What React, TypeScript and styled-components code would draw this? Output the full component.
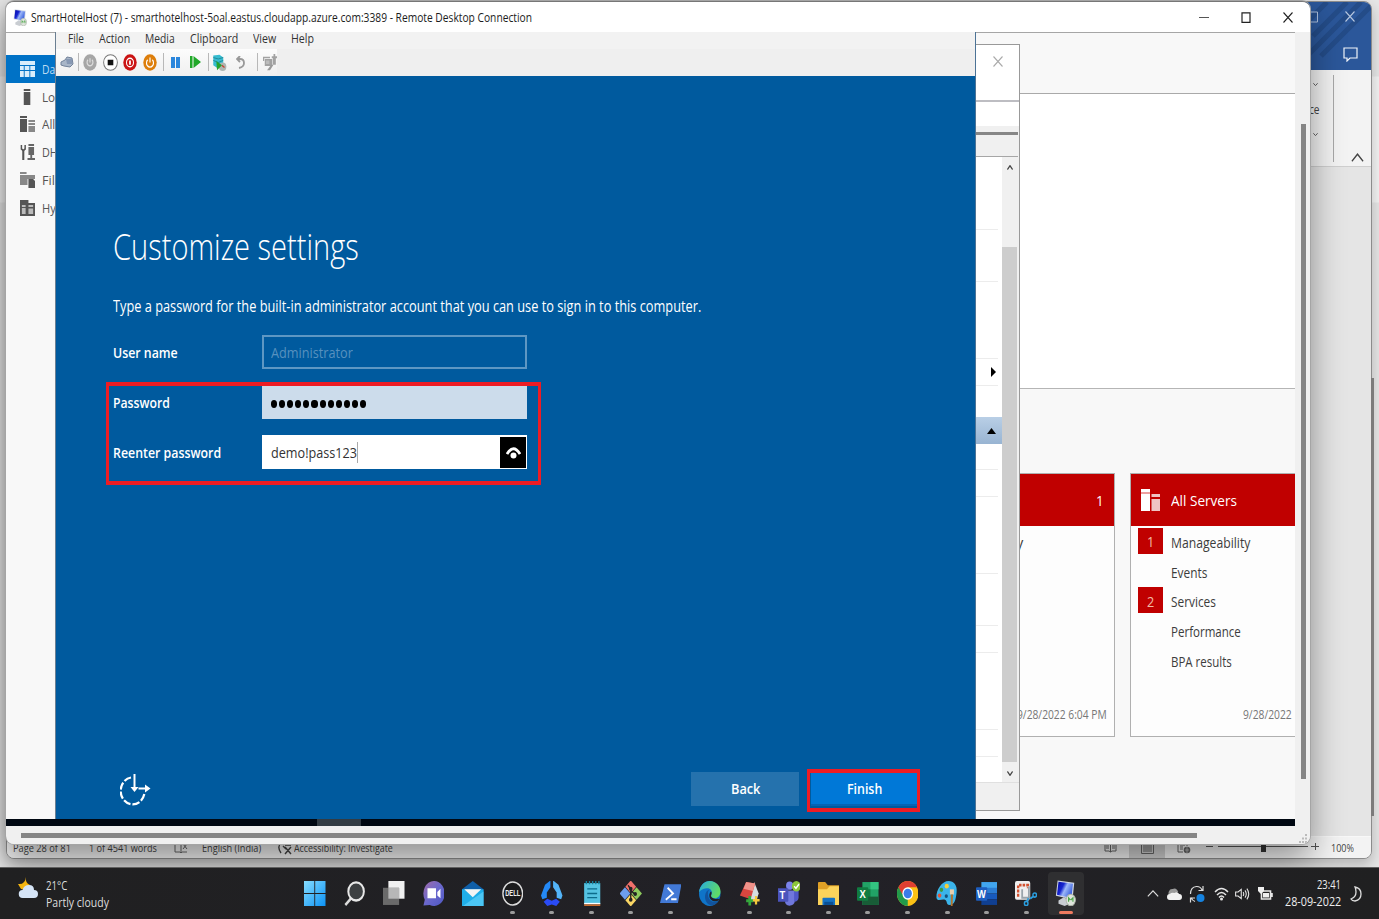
import React, { useLayoutEffect, useRef, useState } from "react";
import styled, { createGlobalStyle } from "styled-components";

const Global = createGlobalStyle`
  *, *::before, *::after { box-sizing: border-box; }
  html, body { margin: 0; padding: 0; overflow: hidden; }
  body { font-family: "Open Sans", "Noto Sans", sans-serif; color: #222; }
  svg { display: block; flex: none; }
`;

/* ---------- condensed text ---------- */

const FitBox = styled.span<{ $w: number }>`
  display: inline-block;
  flex: none;
  width: ${(p) => p.$w}px;
  white-space: nowrap;
`;
const FitInner = styled.span`
  display: inline-block;
  white-space: pre;
  transform-origin: 0 50%;
`;

/* Squeezes its text horizontally to exactly w pixels. */
function Fit({ w, children }: { w: number; children: string }) {
  const ref = useRef<HTMLSpanElement>(null);
  const [scale, setScale] = useState(1);
  useLayoutEffect(() => {
    if (ref.current && ref.current.offsetWidth) {
      setScale(w / ref.current.offsetWidth);
    }
  }, [w, children]);
  return (
    <FitBox $w={w}>
      <FitInner ref={ref} style={{ transform: `scaleX(${scale})` }}>
        {children}
      </FitInner>
    </FitBox>
  );
}

/* ---------- desktop ---------- */

const Desktop = styled.div`
  position: relative;
  width: 1379px;
  height: 919px;
  overflow: hidden;
  background: linear-gradient(#e6e6e6 0 76px, #f3f3f3 77px 202px, #e6e6e6 203px);
`;

/* ---------- Word window ---------- */

const WordWindow = styled.div`
  position: absolute;
  left: 6px;
  top: 1px;
  width: 1366px;
  height: 858px;
  display: flex;
  flex-direction: column;
  border: 1px solid #8c8c8c;
  border-radius: 8px;
  overflow: hidden;
  background: #e5e5e5;
  box-shadow: 0 6px 14px rgba(0, 0, 0, 0.22);
`;
const WordTitle = styled.div`
  position: relative;
  height: 68px;
  flex: none;
  display: flex;
  flex-direction: column;
  align-items: flex-end;
  padding: 9px 13px 0 0;
  gap: 24px;
  background: #2b579a;
`;
const WordStripes = styled.svg`
  position: absolute;
  right: 0;
  top: 0;
`;
const WordControls = styled.div`
  position: relative;
  display: flex;
  gap: 27px;
  padding-right: 3px;
`;
const WordRibbon = styled.div`
  height: 97px;
  flex: none;
  display: flex;
  justify-content: flex-end;
  background: #f3f3f3;
  border-bottom: 1px solid #cfcfcf;
`;
const RibbonGroup = styled.div`
  width: 31px;
  margin: 5px 0 4px;
  border-right: 1px solid #a8a8a8;
  display: flex;
  flex-direction: column;
  gap: 15px;
  padding: 8px 0 0 6px;
  font-size: 12px;
  line-height: 17px;
  color: #444;
  > svg { margin-left: 4px; }
`;
const RibbonCollapse = styled.div`
  width: 37px;
  display: flex;
  align-items: flex-end;
  justify-content: center;
  padding: 0 0 4px 9px;
`;
const WordCanvas = styled.div`
  flex: 1;
`;
const WordStatus = styled.div`
  height: 22px;
  flex: none;
  display: flex;
  align-items: center;
  padding: 0 17px 0 6px;
  background: #f3f3f3;
  border-top: 1px solid #f8f8f8;
  font-size: 11px;
  line-height: 16px;
  color: #444;
`;
const Gap = styled.span<{ $w: number }>`
  width: ${(p) => p.$w}px;
  flex: none;
`;
const Grow = styled.span`
  flex: 1;
`;
const ActiveView = styled.span`
  width: 36px;
  height: 22px;
  display: flex;
  align-items: center;
  justify-content: center;
  background: #cfcfcf;
`;
const WordScrollThumb = styled.div`
  position: absolute;
  left: 1371px;
  top: 378px;
  width: 3px;
  height: 438px;
  background: #7b7b7b;
`;

/* ---------- remote desktop window ---------- */

const RemoteWindow = styled.div`
  position: absolute;
  left: 6px;
  top: 1px;
  width: 1304px;
  height: 843px;
  display: flex;
  flex-direction: column;
  border-radius: 8px;
  overflow: hidden;
  background: #f0f0f0;
  border-top: 1px solid #777;
`;
const RemoteShadow = styled.div`
  position: absolute;
  left: 6px;
  top: 1px;
  width: 1304px;
  height: 843px;
  border-radius: 8px;
  box-shadow: 0 0 0 1px #a5a5a5, 0 15px 34px rgba(0, 0, 0, 0.42);
`;
const TitleBar = styled.div`
  height: 30px;
  flex: none;
  display: flex;
  align-items: center;
  padding: 0 17px 0 7px;
  background: #fff;
  font-size: 12.5px;
  color: #1c1c1c;
`;
const WindowControls = styled.div`
  display: flex;
  gap: 32px;
  margin-left: auto;
`;
const RemoteBody = styled.div`
  display: flex;
  height: 794px;
  flex: none;
`;
const Screen = styled.div`
  position: relative;
  width: 1289px;
  overflow: hidden;
`;
const VScroll = styled.div`
  width: 15px;
  padding: 92px 4px 0 6px;
`;
const VThumb = styled.div`
  height: 655px;
  background: #858585;
`;
const HScroll = styled.div`
  flex: 1;
  display: flex;
  justify-content: space-between;
  align-items: flex-start;
  padding: 7px 2px 0 15px;
`;
const HThumb = styled.div`
  width: 1176px;
  height: 5px;
  background: #858585;
`;
const RemoteTaskStrip = styled.div`
  height: 7px;
  background: #000812;
  padding-left: 311px;
`;
const StripItem = styled.div`
  width: 44px;
  height: 7px;
  background: #333c44;
`;

/* ---------- Server Manager ---------- */

const ServerManager = styled.div`
  display: flex;
  height: 787px;
  border-top: 1px solid #a6a6a6;
  background: #f8f8f8;
`;
const SideNav = styled.div`
  width: 50px;
  flex: none;
  padding-top: 22px;
`;
const NavItem = styled.div<{ $active?: boolean }>`
  display: flex;
  align-items: center;
  gap: 7px;
  height: 27.8px;
  padding-left: 14px;
  font-size: 13.5px;
  overflow: hidden;
  color: ${(p) => (p.$active ? "#bcdcf2" : "#555")};
  background: ${(p) => (p.$active ? "#0072c6" : "none")};
`;
const Dashboard = styled.div`
  flex: 1;
  display: flex;
  flex-direction: column;
`;
const DashHeader = styled.div`
  height: 61px;
  border-bottom: 1px solid #a9a9a9;
`;
const WelcomePane = styled.div`
  height: 295px;
  background: #fff;
  border-bottom: 1px solid #b5b5b5;
`;
const TileRow = styled.div`
  display: flex;
  justify-content: flex-start;
  gap: 15px;
  padding: 84px 0 0 894px;
`;
const Tile = styled.div`
  width: 165px;
  height: 264px;
  flex: none;
  display: flex;
  flex-direction: column;
  border: 1px solid #b0b0b0;
  background: #fdfdfd;
  font-size: 14.5px;
  color: #3c3c3c;
  & + & { border-right: 0; }
`;
const TileHead = styled.div`
  height: 52px;
  flex: none;
  display: flex;
  align-items: center;
  gap: 11px;
  padding: 0 10px;
  background: #c00000;
  color: #fff;
  font-size: 15px;
`;
const TileLine = styled.div`
  display: flex;
  align-items: center;
  gap: 8px;
  height: 29.8px;
  padding-left: 7px;
  > span:last-child { padding-top: 3px; }
`;
const Count = styled.span<{ $on: boolean }>`
  width: 25px;
  height: 26px;
  display: flex;
  align-items: center;
  justify-content: center;
  padding-top: 2px;
  color: #f3b9a4;
  background: ${(p) => (p.$on ? "#c00000" : "transparent")};
`;
const TileDate = styled.div<{ $pad: number }>`
  margin-top: auto;
  padding: 0 ${(p) => p.$pad}px 12px 0;
  text-align: right;
  font-size: 13px;
  line-height: 20px;
  color: #777;
`;

/* ---------- Hyper-V Manager window behind the VM ---------- */

const ManagerWindow = styled.div`
  position: absolute;
  left: 920px;
  top: 12px;
  width: 94px;
  height: 767px;
  display: flex;
  flex-direction: column;
  padding-left: 49px;
  border: 1px solid #999;
  background: #f0f0f0;
`;
const ManagerTitle = styled.div`
  height: 57px;
  padding: 11px 0 0 17px;
  background: #fff;
  border-bottom: 2px solid #bdbdc2;
`;
const ManagerMenu = styled.div`
  height: 24px;
  background: #fff;
`;
const ManagerTools = styled.div`
  height: 25px;
  margin: 6px 1px 0 0;
  border-top: 3px solid #868686;
  border-bottom: 1px solid #a6a6a6;
`;
const ManagerBody = styled.div`
  display: flex;
  height: 626px;
  border-bottom: 1px solid #e0e0e0;
`;
const Actions = styled.div`
  width: 26px;
  background: #fff;
`;
const ActionBlock = styled.div<{ $h: number; $line?: boolean; $hot?: boolean }>`
  display: flex;
  align-items: center;
  justify-content: flex-end;
  height: ${(p) => p.$h}px;
  margin-right: ${(p) => (p.$hot ? 0 : 4)}px;
  padding-right: ${(p) => (p.$hot ? 6 : 2)}px;
  border-bottom: ${(p) => (p.$line ? "1px solid #ececec" : "0")};
  background: ${(p) => (p.$hot ? "linear-gradient(#b9cfe6, #98b4d2)" : "none")};
`;
const ManagerScroll = styled.div`
  width: 15px;
  display: flex;
  flex-direction: column;
  justify-content: space-between;
  align-items: center;
  padding: 8px 0 6px;
  background: #f0f0f0;
`;
const ManagerThumb = styled.div`
  width: 15px;
  height: 515px;
  margin-top: 67px;
  background: #cdcdcd;
`;

/* ---------- virtual machine window ---------- */

const VmWindow = styled.div`
  position: absolute;
  left: 49px;
  top: 0;
  width: 921px;
  height: 787px;
  display: flex;
  flex-direction: column;
  border-left: 1px solid #6b7f92;
  border-right: 1px solid #4c7396;
  background: #f2f2f2;
`;
const MenuBar = styled.div`
  display: flex;
  gap: 15px;
  height: 17px;
  flex: none;
  padding-left: 12px;
  font-size: 12px;
  line-height: 13px;
  color: #333;
`;
const ToolArea = styled.div`
  height: 27px;
  flex: none;
  background: #efefef;
`;
const ToolBar = styled.div`
  width: 221px;
  height: 26px;
  display: flex;
  align-items: center;
  padding-left: 4px;
  background: linear-gradient(#fcfcfc, #f0f0f0);
`;
const ToolSep = styled.span<{ $m: number }>`
  width: 1px;
  height: 18px;
  margin: 0 ${(p) => p.$m}px;
  background: #b8b8b8;
`;
const ToolSlot = styled.span<{ $w: number }>`
  width: ${(p) => p.$w}px;
  flex: none;
  display: flex;
  justify-content: center;
`;
const VmScreen = styled.div`
  flex: 1;
  display: flex;
  flex-direction: column;
  padding: 145px 57px 13px 57px;
  background: #005a9e;
  color: #fff;
`;
const Heading = styled.h1`
  margin: 0;
  height: 51px;
  font-size: 36px;
  line-height: 51px;
  font-weight: 300;
`;
const Intro = styled.p`
  margin: 23px 0 18px;
  font-size: 15.5px;
  line-height: 22px;
`;
const Form = styled.div`
  display: flex;
  flex-direction: column;
  gap: 16px;
`;
const FormRow = styled.div`
  display: flex;
  align-items: center;
  height: 34px;
  font-size: 15px;
`;
const FormLabel = styled.div`
  width: 149px;
  font-weight: 600;
`;
const Field = styled.div<{ $kind: "disabled" | "filled" | "focus" }>`
  width: 265px;
  height: 34px;
  display: flex;
  align-items: center;
  padding: 0 1px 0 ${(p) => (p.$kind === "disabled" ? 7 : 9)}px;
  color: ${(p) => (p.$kind === "disabled" ? "#5791bf" : p.$kind === "filled" ? "#000" : "#333")};
  background: ${(p) => ({ disabled: "transparent", filled: "#ccdceb", focus: "#fff" })[p.$kind]};
  border: ${(p) => (p.$kind === "disabled" ? "2px solid #5e97c3" : "0")};
`;
const Dots = styled.span`
  display: flex;
  gap: 2px;
  padding-top: 4px;
`;
const Dot = styled.i`
  width: 6.1px;
  height: 7.5px;
  border-radius: 50%;
  background: #000;
`;
const Caret = styled.span`
  width: 1px;
  height: 21px;
  background: #aaa;
`;
const Reveal = styled.span`
  width: 26px;
  height: 31px;
  margin-left: auto;
  display: flex;
  align-items: center;
  justify-content: center;
  background: #000;
`;
const VmFooter = styled.div`
  display: flex;
  align-items: center;
  gap: 12px;
  margin-top: auto;
  padding-left: 7px;
`;
const WizardButton = styled.button<{ $primary?: boolean }>`
  width: ${(p) => (p.$primary ? 107 : 108)}px;
  height: 34px;
  padding: 0 0 ${(p) => (p.$primary ? 0 : 1)}px;
  border: 0;
  border-bottom: ${(p) => (p.$primary ? "2px solid #0763b4" : "0")};
  font: 600 14.5px "Open Sans", sans-serif;
  color: #fff;
  background: ${(p) => (p.$primary ? "#0078d7" : "#2572ad")};
`;
const Callout = styled.div<{ $x: number; $y: number; $w: number; $h: number }>`
  position: absolute;
  left: ${(p) => p.$x}px;
  top: ${(p) => p.$y}px;
  width: ${(p) => p.$w}px;
  height: ${(p) => p.$h}px;
  border: 4px solid #ed1c24;
  border-left-width: 3px;
  border-right-width: 3px;
`;

/* ---------- taskbar ---------- */

const TaskBar = styled.div`
  position: absolute;
  left: 0;
  right: 0;
  bottom: 0;
  height: 52px;
  display: flex;
  align-items: center;
  border-top: 1px solid #606060;
  background: linear-gradient(90deg, #202021, #222127 60%, #202021);
  color: #eee;
  font-size: 12px;
`;
const Weather = styled.div`
  width: 295px;
  display: flex;
  gap: 8px;
  padding-left: 18px;
`;
const WeatherText = styled.div`
  display: flex;
  flex-direction: column;
  line-height: 17px;
  color: #ddd;
`;
const AppCell = styled.div<{ $active?: boolean }>`
  width: ${(p) => (p.$active ? 36 : 39.53)}px;
  height: 43px;
  flex: none;
  display: flex;
  flex-direction: column;
  align-items: center;
  justify-content: flex-end;
  gap: 5px;
  margin-left: ${(p) => (p.$active ? 2 : 0)}px;
  border-radius: 4px;
  background: ${(p) => (p.$active ? "#2f2f31" : "none")};
`;
const Mark = styled.span<{ $kind: "none" | "open" | "active" }>`
  width: ${(p) => (p.$kind === "active" ? 14 : 5)}px;
  height: 3px;
  border-radius: 2px;
  margin-bottom: 1px;
  background: ${(p) => ({ none: "transparent", open: "#9b9b9b", active: "#ef7b60" })[p.$kind]};
`;
const Tray = styled.div`
  display: flex;
  align-items: center;
  margin-left: auto;
  padding-right: 17px;
`;
const Clock = styled.div`
  display: flex;
  flex-direction: column;
  align-items: flex-end;
  line-height: 17px;
  font-size: 12.5px;
  margin: 0 9px 1px 12px;
`;

/* ---------- icons ---------- */

const Art = ({ w, h, box = "0 0 24 24", children }: { w: number; h: number; box?: string; children: React.ReactNode }) => (
  <svg width={w} height={h} viewBox={box} preserveAspectRatio="none" fill="none">
    {children}
  </svg>
);

const Letter = ({ x, y, children }: { x: number; y: number; children: string }) => (
  <text x={x} y={y} fontSize="10.5" fontWeight="700" fontFamily="Liberation Sans, sans-serif" textAnchor="middle" fill="#fff">
    {children}
  </text>
);

const RemoteIcon = ({ w, h }: { w: number; h: number }) => (
  <Art w={w} h={h}>
    <defs>
      <linearGradient id="scr" x1="0" y1="0" x2="1" y2=".5">
        <stop offset="0" stopColor="#0508a8" />
        <stop offset=".4" stopColor="#1626d0" />
        <stop offset=".6" stopColor="#9db8f8" />
        <stop offset="1" stopColor="#3c62df" />
      </linearGradient>
    </defs>
    <path d="M4 19l6-3 7 3v3l-6 2-7-2z" fill="#c9cdd2" />
    <path d="M3 .5l19 2-2 15.500L1 14.500z" fill="#cfd6e4" />
    <path d="M4 1.500l16.500 2-1.800 13L2.300 13.500z" fill="url(#scr)" />
    <circle cx="18" cy="18.500" r="5.300" fill="#dfe5dc" stroke="#aeb5ab" />
    <path d="M15.500 20v-3.500l2 2M18 18.500l2.500-2V20" stroke="#4ca64a" strokeWidth="1.300" />
  </Art>
);

const CloseX = ({ c, s = 10 }: { c: string; s?: number }) => (
  <Art w={s} h={s + 1} box="0 0 10 10">
    <path d="M.5.5l9 9M9.500.5l-9 9" stroke={c} strokeWidth="1.100" />
  </Art>
);

const Chevron = ({ c, w, h, up }: { c: string; w: number; h: number; up?: boolean }) => (
  <Art w={w} h={h} box="0 0 10 6">
    <path d={up ? "M.7 5.500L5 .8l4.300 4.700" : "M.7.5L5 5.200 9.300.5"} stroke={c} strokeWidth={w < 8 ? 1.8 : 1} />
  </Art>
);

const navIcons: Record<string, React.ReactNode> = {
  dash: <path d="M0 0h16v4H0zM0 5h4v4H0zM5 5h5v4H5zM11 5h5v4h-5zM0 10h4v6H0zM5 10h5v6H5zM11 10h5v6h-5z" fill="#d9eefb" />,
  local: <path d="M4 0h7v2H4zM4 3h7v13H4z" fill="#555" />,
  all: (
    <>
      <path d="M0 0h7.500v2H0zM0 3h7.500v13H0z" fill="#555" />
      <path d="M9 4h7v2H9zM9 7h7v2H9zM9 10h7v6H9z" fill="#888" />
    </>
  ),
  dhcp: (
    <>
      <path d="M1.500 1v4l2 1.500 2-1.500V1" stroke="#555" strokeWidth="1.600" />
      <path d="M3.500 6v10" stroke="#555" strokeWidth="2.200" />
      <path d="M9 0h6v2H9zM9 3h6v8H9zM11 11h2v5h-2zM8 14h8v2H8z" fill="#666" />
    </>
  ),
  file: (
    <>
      <path d="M0 0h7v2H0zM0 3h16v4H8v6H0z" fill="#888" />
      <path d="M9 7h5l2 2v7H9z" fill="#555" />
    </>
  ),
  hyper: (
    <>
      <path d="M0 0h9v3h7v13H0z" fill="#555" />
      <path d="M2 5h4v2H2zM2 8h4v6H2zM9 5h5v2H9zM9 8.500h5V14H9z" fill="#bbb" />
    </>
  ),
};

const appIcons: { name: string; mark: "none" | "open" | "active"; art: React.ReactNode }[] = [
  {
    name: "start", mark: "none",
    art: (
      <>
        <linearGradient id="win" x1="0" y1="0" x2="1" y2="1"><stop stopColor="#86ddff" /><stop offset="1" stopColor="#0c92f5" /></linearGradient>
        <path d="M0 0h11.500v11.500H0zM12.500 0H24v11.500H12.500zM0 12.500h11.500V24H0zM12.500 12.500H24V24H12.500z" fill="url(#win)" />
      </>
    ),
  },
  {
    name: "search", mark: "none",
    art: (
      <>
        <path d="M8 16.500L1.500 23" stroke="#ddd" strokeWidth="2.600" />
        <circle cx="13.500" cy="10" r="8.700" fill="#3d4042" stroke="#e8e8e8" strokeWidth="2.200" />
      </>
    ),
  },
  {
    name: "tasks", mark: "none",
    art: (
      <>
        <path d="M6 0h18v17H6z" fill="#f1f1f1" />
        <path d="M0 6.500h18V23H0z" fill="#6a6a6a" />
        <path d="M6 6.500h12V17H6z" fill="#b7b7b7" />
      </>
    ),
  },
  {
    name: "chat", mark: "none",
    art: (
      <>
        <linearGradient id="chat" x1="0" y1="0" x2="1" y2="1"><stop stopColor="#a06aa8" /><stop offset=".5" stopColor="#6a68cc" /><stop offset="1" stopColor="#4d57c4" /></linearGradient>
        <path d="M12 0a12 12 0 1 1-4.500 23L.5 23.500 2 18A12 12 0 0 1 12 0z" fill="url(#chat)" />
        <path d="M5 7h9.500v9.500H5zM16 10.500l3.500-3v9L16 14z" fill="#fff" />
      </>
    ),
  },
  {
    name: "mail", mark: "none",
    art: (
      <>
        <path d="M0 8L12 0l12 8v3H0z" fill="#0f5fa8" />
        <path d="M0 8h24v16H0z" fill="#1faee8" />
        <path d="M24 10v14H1z" fill="#4cc6f4" />
        <path d="M2.500 8h19L12 15.500z" fill="#f4f4f4" />
      </>
    ),
  },
  {
    name: "dell", mark: "open",
    art: (
      <>
        <circle cx="12" cy="12" r="11" fill="#1b1b1d" stroke="#ddd" strokeWidth="1.500" />
        <text x="3.500" y="14.800" fontSize="8" fontWeight="700" fontFamily="Liberation Sans, sans-serif" fill="#eee" textLength="17" lengthAdjust="spacingAndGlyphs">DELL</text>
      </>
    ),
  },
  {
    name: "hub", mark: "open",
    art: (
      <>
        <path d="M10.500-.5v6.500L6.500 11v5L1.500 17.500 0 14 4.500 3.500z" fill="#2489f7" />
        <path d="M13.500-.5v6.500l4 5v5l5 1.500L24 14 19.500 3.500z" fill="#53b4f8" />
        <path d="M3 20l4-3 5 2 5-2 4 3-4 4-5-1.500L7 24z" fill="#2a4bf5" />
      </>
    ),
  },
  {
    name: "notes", mark: "open",
    art: (
      <>
        <path d="M3.500 2h18v20h-18z" fill="#55c3e2" />
        <path d="M3.500 21h18v1.500h-18z" fill="#fff" /><path d="M3.500 22.500h18V24h-18z" fill="#c96b2c" />
        <path d="M6 0v3M9.500 0v3M13 0v3M16.500 0v3M20 0v3" stroke="#15819e" strokeWidth="1.500" />
        <path d="M7 7.500h11M7 12h11M7 16h11" stroke="#0d6c8c" strokeWidth="1.300" />
      </>
    ),
  },
  {
    name: "git", mark: "open",
    art: (
      <>
        <path d="M12-.5l6 6-6 6-6-6z" fill="#f0716b" /><path d="M18.500 6l6 6-6 6-6-6z" fill="#8fcb5d" />
        <path d="M12 12.500l6 6-6 6-6-6z" fill="#fbd765" /><path d="M5.500 6l6 6-6 6-6-6z" fill="#6d9eee" />
        <path d="M9 4l3 4v11M12 9l5 4" stroke="#222" strokeWidth="1.500" />
        <circle cx="12" cy="7.500" r="2" fill="#222" /><circle cx="12" cy="18" r="2" fill="#222" /><circle cx="17" cy="12.500" r="2" fill="#222" />
      </>
    ),
  },
  {
    name: "shell", mark: "open",
    art: (
      <>
        <path d="M5 3h19l-4 18H0z" fill="#4279d6" />
        <path d="M8.500 6.500l6 5.500-8 6M12.500 17.500h6" stroke="#fff" strokeWidth="2" />
      </>
    ),
  },
  {
    name: "edge", mark: "open",
    art: (
      <>
        <linearGradient id="edg" x1="0" y1="0" x2="1" y2=".4"><stop stopColor="#26a9e0" /><stop offset="1" stopColor="#5fdb67" /></linearGradient>
        <circle cx="12" cy="12" r="12" fill="#0f74c8" />
        <path d="M0 11C1 4 6 0 12 0c7 0 12 5 12 10 0 4-3 6.500-6.500 6.500S13 15 14 13c1.500-4-2-6.500-5.500-6C4 7.500 1 9 0 11z" fill="url(#edg)" />
        <path d="M8.500 10c-4 5-1 13 6 13.500 3 0 6-2 7.500-4.500-5 3-13 0-12-8 .3-1 .8-2 1.500-2.500-1 0-2 .5-3 1.500z" fill="#12539d" />
        <path d="M13.500 10c1 1 .5 2.500-.3 4 0 2 3.300 4 7.800 3l2 .5-2 1.500c-3.500 1.500-9.500 0-9.500-5 0-1.500.5-3 2-4z" fill="#222127" />
      </>
    ),
  },
  {
    name: "cards", mark: "open",
    art: (
      <>
        <path d="M17 1l5 11-3 8-7-2z" fill="#d6dde0" />
        <path d="M8 1l10 1.500-5 15L1 14z" fill="#d8463f" /><path d="M8 1l10 1.500-2.500 7L5 7.500z" fill="#f0928a" />
        <path d="M12 14.500v9M8 19h8" stroke="#35a83c" strokeWidth="3" />
        <path d="M19 14.500v8M15.500 18.500H23" stroke="#f4c93c" strokeWidth="2.500" />
      </>
    ),
  },
  {
    name: "teams", mark: "open",
    art: (
      <>
        <circle cx="13" cy="4.500" r="4" fill="#7b83eb" /><path d="M8 9h11v8a6 6 0 0 1-11 4z" fill="#7078dc" /><path d="M18 9h5v7a4.500 4.500 0 0 1-5 4z" fill="#5059c9" />
        <rect x="-1" y="7" width="12.500" height="13" rx="1" fill="#4b53bc" />
        <Letter x={5} y={17.500}>T</Letter>
        <circle cx="20.500" cy="5" r="5" fill="#8cc63a" /><path d="M18 5l2 2 3.500-4" stroke="#fff" strokeWidth="1.500" />
      </>
    ),
  },
  {
    name: "files", mark: "open",
    art: (
      <>
        <path d="M0 2q0-1 1-1h7l3 3h12q1 0 1 1v6H0z" fill="#e0a126" />
        <path d="M0 8h10l3-3h11v18H0z" fill="#fcd35b" />
        <path d="M5 17q0-1 1-1h12q1 0 1 1v6H5z" fill="#1672c4" /><path d="M7 20h10v3H7z" fill="#0a4f94" />
      </>
    ),
  },
  {
    name: "excel", mark: "open",
    art: (
      <>
        <path d="M6 1h18v22H6z" fill="#21a366" /><path d="M15 1h9v7h-9z" fill="#33c481" /><path d="M6 8h9v8H6z" fill="#107c41" /><path d="M6 15h18v8H6z" fill="#185c37" />
        <rect x="0" y="6" width="12.500" height="13" rx="1" fill="#107c41" />
        <Letter x={6.200} y={16.200}>X</Letter>
      </>
    ),
  },
  {
    name: "chrome", mark: "open",
    art: (
      <>
        <circle cx="12" cy="12" r="12" fill="#fbc116" />
        <path d="M1.600 6L12 6l0 18A12 12 0 0 1 1.600 6z" fill="#229a4a" />
        <path d="M1.600 6A12 12 0 0 1 22.400 6H12l-6 7z" fill="#df3f32" />
        <circle cx="12" cy="12" r="6" fill="#fff" /><circle cx="12" cy="12" r="4.600" fill="#3a7ce8" />
      </>
    ),
  },
  {
    name: "paint", mark: "open",
    art: (
      <>
        <path d="M14 0c6 0 10 4 9 11s-2 12-8 12c-4 0-2-4-5-5s-9 2-9.500-2C0 8 7 0 14 0z" fill="#3bb4ea" />
        <circle cx="6" cy="8.500" r="2" fill="#3f9a3b" /><circle cx="12" cy="5" r="2.300" fill="#f4cf3a" /><circle cx="4" cy="14" r="2" fill="#e55536" /><circle cx="11.500" cy="14.500" r="1.800" fill="#14527e" />
        <path d="M15.500 8h4.500v5h-4.500z" fill="#e8cfae" /><path d="M16.500 13h2.500l-.5 11h-2z" fill="#b4742e" />
      </>
    ),
  },
  {
    name: "word", mark: "open",
    art: (
      <>
        <path d="M6 1h18v6H6z" fill="#41a5ee" /><path d="M6 6.500h18V12H6z" fill="#2b7cd3" /><path d="M6 12h18v5.500H6z" fill="#185abd" /><path d="M6 17.500h18V23H6z" fill="#103f91" />
        <rect x="0" y="6" width="12.500" height="13" rx="1" fill="#1d5ec0" />
        <Letter x={6.200} y={16.200}>W</Letter>
      </>
    ),
  },
  {
    name: "snip", mark: "open",
    art: (
      <>
        <rect x="0" y="0" width="17" height="18" rx="2" fill="#efefef" />
        <path d="M3.500 15V4h11v3" stroke="#d3512f" strokeWidth="2.600" strokeDasharray="2.800 1.200" />
        <path d="M8 8v8h9M15.500 5v11l-2 4" stroke="#9aa4ab" strokeWidth="2" />
        <circle cx="22" cy="13.500" r="2" stroke="#2b9fe0" strokeWidth="1.600" /><circle cx="12.500" cy="21.500" r="2" stroke="#2b9fe0" strokeWidth="1.600" /><path d="M20 15l-3 2M13.500 19.500l1.500-3" stroke="#2b9fe0" strokeWidth="1.800" />
      </>
    ),
  },
];

const SpeakerWaves = <path d="M1 9h4l5-4v14l-5-4H1zM13 9q2 3 0 6M16 6.500q4 5.500 0 11M19 4q6 8 0 16" stroke="#e6e6e6" strokeWidth="1.700" />;

/* ---------- page parts ---------- */

const Word = () => (
  <WordWindow>
    <WordTitle>
      <WordStripes width="66" height="68" viewBox="0 0 66 68">
        <g stroke="#244c88" strokeWidth="5">
          <path d="M0 22L22 0M8 34L42 0M-2 58L56 0M16 54L70 0" />
        </g>
      </WordStripes>
      <WordControls>
        <Art w={10} h={12} box="0 0 10 12"><path d="M.5 1h9v10h-9z" stroke="#a9bcd9" /></Art>
        <CloseX c="#b7c7df" />
      </WordControls>
      <Art w={15} h={15} box="0 0 15 15"><path d="M1 1h13v10H7l-3 3v-3H1z" stroke="#f2f5fa" strokeWidth="1.200" /></Art>
    </WordTitle>
    <WordRibbon>
      <RibbonGroup>
        <Chevron c="#555" w={5} h={3} />
        <Fit w={11}>ce</Fit>
        <Chevron c="#555" w={5} h={3} />
      </RibbonGroup>
      <RibbonCollapse><Chevron up c="#444" w={13} h={9} /></RibbonCollapse>
    </WordRibbon>
    <WordCanvas />
    <WordStatus>
      <Fit w={58}>Page 28 of 81</Fit><Gap $w={18} />
      <Fit w={68}>1 of 4541 words</Fit><Gap $w={17} />
      <Art w={14} h={12} box="0 0 14 12"><path d="M1 1v9h5l1 1 1-1h5M7 1v10M9 2l4 5M13 2L9 7" stroke="#666" /></Art>
      <Gap $w={14} /><Fit w={59}>English (India)</Fit><Gap $w={17} />
      <Art w={15} h={14} box="0 0 15 14"><path d="M4 1C0 4 0 8 3 12M7 4l6 0M7 6l6 7M13 6l-6 7M5 5l3 3" stroke="#444" strokeWidth="1.400" /></Art>
      <Gap $w={1} /><Fit w={99}>Accessibility: Investigate</Fit>
      <Grow />
      <Art w={13} h={11} box="0 0 13 11"><path d="M1 1h4l1.500 1L8 1h4v8H8l-1.500 1L5 9H1zM6.500 2v8M2 4h3M2 6h3M8 4h3M8 6h3" stroke="#666" /></Art>
      <Gap $w={12} />
      <ActiveView><Art w={13} h={12} box="0 0 13 12"><path d="M.5.5h12v11H.5zM2 3h9M2 5h9M2 7h9M2 9h9" stroke="#666" /></Art></ActiveView>
      <Gap $w={12} />
      <Art w={14} h={12} box="0 0 14 12"><path d="M1 1h9v3M1 1v9h5M3 3h5M3 5h3M3 7h3" stroke="#666" /><circle cx="10" cy="8" r="3.300" fill="#666" /><path d="M8 8h4M10 5v6" stroke="#ddd" strokeWidth=".6" /></Art>
      <Gap $w={15} />
      <Art w={109} h={11} box="0 0 109 11"><path d="M0 4.500h7M12 4.500h90M105 4.500h7" stroke="#555" /><path d="M55 0h5v10h-5z" fill="#333" /></Art>
      <Art w={4} h={11} box="0 0 4 11"><path d="M0 4.500h4M.5 1v7" stroke="#555" /></Art>
      <Gap $w={12} /><Fit w={23}>100%</Fit>
    </WordStatus>
  </WordWindow>
);

const Nav = () => (
  <SideNav>
    {([["dash", "Da", 13], ["local", "Lo", 13], ["all", "All", 13], ["dhcp", "DH", 16], ["file", "Fil", 13], ["hyper", "Hy", 14]] as [string, string, number][]).map(([icon, text, w], i) => (
      <NavItem key={icon} $active={i === 0}>
        <Art w={15} h={16} box="0 0 16 16">{navIcons[icon]}</Art>
        <Fit w={w}>{text}</Fit>
      </NavItem>
    ))}
  </SideNav>
);

const tileRows: [string, string, number][] = [["1", "Manageability", 79], ["", "Events", 36], ["2", "Services", 45], ["", "Performance", 70], ["", "BPA results", 61]];

const Manager = () => (
  <ManagerWindow>
    <ManagerTitle><CloseX c="#aaa" /></ManagerTitle>
    <ManagerMenu />
    <ManagerTools />
    <ManagerBody>
      <Actions>
        <ActionBlock $h={73} $line />
        <ActionBlock $h={52} $line />
        <ActionBlock $h={77} $line />
        <ActionBlock $h={27} $line><Art w={5} h={10} box="0 0 5 10"><path d="M0 0l5 5-5 5z" fill="#000" /></Art></ActionBlock>
        <ActionBlock $h={31} />
        <ActionBlock $h={27} $hot><Art w={9} h={6} box="0 0 10 6"><path d="M0 6l5-6 5 6z" fill="#000" /></Art></ActionBlock>
        {[26, 27, 77, 52, 27, 77, 27].map((h, i) => <ActionBlock key={i} $h={h} $line />)}
      </Actions>
      <ManagerScroll>
        <Chevron up c="#444" w={6} h={5} />
        <ManagerThumb />
        <Chevron c="#444" w={6} h={5} />
      </ManagerScroll>
    </ManagerBody>
  </ManagerWindow>
);

const VmTools = () => (
  <ToolArea>
    <ToolBar>
      <Art w={14} h={12} box="0 0 14 12"><path d="M1 6l4-2 2-3 5 1 1 6-3 3-6-1-3-1z" fill="#a9b6c8" stroke="#72829a" /><path d="M6 3h6v5H7z" fill="#8798b3" /></Art>
      <ToolSep $m={4} />
      <ToolSlot $w={15}><Art w={14} h={17}><circle cx="12" cy="12" r="11.500" fill="#a6a6a6" /><path d="M8.500 8a5 5 0 1 0 7 0M12 6v6" stroke="#ddd" strokeWidth="2" /></Art></ToolSlot>
      <ToolSlot $w={25}><Art w={15} h={17}><circle cx="12" cy="12" r="11" fill="#fff" stroke="#777" strokeWidth="1.500" /><path d="M7.500 8h9v8h-9z" fill="#111" /></Art></ToolSlot>
      <ToolSlot $w={15}><Art w={14} h={17}><circle cx="12" cy="12" r="11.500" fill="#cb1414" /><circle cx="12" cy="12" r="6" stroke="#fff" strokeWidth="1.800" /><path d="M12 9v6" stroke="#fff" strokeWidth="3" /></Art></ToolSlot>
      <ToolSlot $w={25}><Art w={14} h={17}><circle cx="12" cy="12" r="11.500" fill="#dd7e0b" /><path d="M8 8a6 6 0 1 0 8 0M12 5v7" stroke="#fff" strokeWidth="2" /></Art></ToolSlot>
      <ToolSep $m={0} />
      <ToolSlot $w={23}><Art w={9} h={11} box="0 0 9 11"><path d="M0 0h4v11H0zM5 0h4v11H5z" fill="#2b86dc" /></Art></ToolSlot>
      <ToolSlot $w={18}><Art w={11} h={12} box="0 0 11 12"><path d="M0 0h2.500v12H0zM3.500 0L11 6l-7.500 6z" fill="#21a829" /></Art></ToolSlot>
      <Gap $w={3} /><ToolSep $m={0} />
      <ToolSlot $w={23}><Art w={15} h={17}><path d="M2 2l10-1 6 4v11l-9 4-7-4z" fill="#37bcd0" /><path d="M2 5l8 2 8-2M2 9l8 3 8-3" stroke="#16727f" /><circle cx="17" cy="18" r="6" fill="#aeb6b2" /><path d="M7 10l9 6-8 7z" fill="#25a32d" /><path d="M16 16l4 3" stroke="#c4452f" strokeWidth="2" /></Art></ToolSlot>
      <ToolSlot $w={18}><Art w={9} h={13} box="0 0 9 13"><path d="M4 0L1 3l3 3M1 3h3q4 0 4 4t-5 5" stroke="#999" strokeWidth="1.800" /></Art></ToolSlot>
      <Gap $w={3} /><ToolSep $m={5} />
      <Art w={14} h={17}><path d="M0 4h12v2H2v4H0zM3 7h13v10H3zM15 3h3V0h3v3h3v3h-2v9h-5V6h-2z" fill="#a2a2a2" /><path d="M5 9h6v5H5z" fill="#bbb" /><path d="M14 15l-7 8h5l6-8z" fill="#999" /></Art>
    </ToolBar>
  </ToolArea>
);

const Vm = () => (
  <VmWindow>
    <MenuBar>
      <Fit w={16}>File</Fit><Fit w={31}>Action</Fit><Fit w={30}>Media</Fit><Fit w={48}>Clipboard</Fit><Fit w={23}>View</Fit><Fit w={23}>Help</Fit>
    </MenuBar>
    <VmTools />
    <VmScreen>
      <Heading><Fit w={246}>Customize settings</Fit></Heading>
      <Intro><Fit w={588}>Type a password for the built-in administrator account that you can use to sign in to this computer.</Fit></Intro>
      <Form>
        <FormRow><FormLabel><Fit w={65}>User name</Fit></FormLabel><Field $kind="disabled"><Fit w={82}>Administrator</Fit></Field></FormRow>
        <FormRow>
          <FormLabel><Fit w={57}>Password</Fit></FormLabel>
          <Field $kind="filled"><Dots>{Array.from({ length: 12 }, (_, i) => <Dot key={i} />)}</Dots></Field>
        </FormRow>
        <FormRow>
          <FormLabel><Fit w={108}>Reenter password</Fit></FormLabel>
          <Field $kind="focus">
            <Fit w={86}>demo!pass123</Fit><Caret />
            <Reveal><Art w={15} h={13} box="0 0 15 13"><path d="M1 8q6.500-10.500 13 0" stroke="#fff" strokeWidth="2.800" /><circle cx="7.500" cy="9.500" r="3" fill="#fff" /></Art></Reveal>
          </Field>
        </FormRow>
      </Form>
      <VmFooter>
        <Art w={31} h={33} box="0 0 31 33">
          <path d="M11 4.500A12 13.500 0 1 0 24.500 20" stroke="#fff" strokeWidth="2.200" strokeDasharray="7.500 2" />
          <path d="M14.500 1v14" stroke="#fff" strokeWidth="2" /><path d="M10.500 14h8l-4 5z" fill="#fff" />
          <path d="M18.500 15.500h7" stroke="#fff" strokeWidth="2" /><path d="M25 11.500l5.500 4-5.500 4z" fill="#fff" />
        </Art>
        <Grow />
        <WizardButton><Fit w={29}>Back</Fit></WizardButton>
        <WizardButton $primary><Fit w={35}>Finish</Fit></WizardButton>
      </VmFooter>
    </VmScreen>
  </VmWindow>
);

export default function App() {
  return (
    <Desktop>
      <Global />
      <Word />
      <RemoteShadow />
      <WordScrollThumb />
      <RemoteWindow>
        <TitleBar>
          <RemoteIcon w={14} h={17} />
          <Gap $w={4} />
          <Fit w={501}>SmartHotelHost (7) - smarthotelhost-5oal.eastus.cloudapp.azure.com:3389 - Remote Desktop Connection</Fit>
          <WindowControls>
            <Art w={10} h={11} box="0 0 10 11"><path d="M0 5.500h10" stroke="#555" /></Art>
            <Art w={10} h={11} box="0 0 10 11"><path d="M1 .8h8v9.500H1z" stroke="#222" strokeWidth="1.200" /></Art>
            <CloseX c="#222" />
          </WindowControls>
        </TitleBar>
        <RemoteBody>
          <Screen>
            <ServerManager>
              <Nav />
              <Dashboard>
                <DashHeader />
                <WelcomePane />
                <TileRow>
                  <Tile>
                    <TileHead><Grow /><Fit w={8}>1</Fit></TileHead>
                    <TileLine><Gap $w={50} /><Fit w={7}>y</Fit></TileLine>
                    <TileDate $pad={7}><Fit w={90}>9/28/2022 6:04 PM</Fit></TileDate>
                  </Tile>
                  <Tile>
                    <TileHead>
                      <Art w={19} h={22} box="0 0 19 22"><path d="M0 0h9v3H0zM0 5h9v17H0z" fill="#fff" /><path d="M0 3h9v2H0z" fill="#eda0a0" /><path d="M10.500 5H19v3h-8.500zM10.500 10H19v12h-8.500z" fill="#efc4c4" /></Art>
                      <Fit w={66}>All Servers</Fit>
                    </TileHead>
                    {tileRows.map(([n, label, w]) => (
                      <TileLine key={label}><Count $on={!!n}>{n && <Fit w={7}>{n}</Fit>}</Count><Fit w={w}>{label}</Fit></TileLine>
                    ))}
                    <TileDate $pad={3}><Fit w={49}>9/28/2022</Fit></TileDate>
                  </Tile>
                </TileRow>
              </Dashboard>
            </ServerManager>
            <Manager />
            <Vm />
            <Callout $x={100} $y={350} $w={435} $h={103} />
            <Callout $x={801} $y={737} $w={113} $h={43} />
            <RemoteTaskStrip><StripItem /></RemoteTaskStrip>
          </Screen>
          <VScroll><VThumb /></VScroll>
        </RemoteBody>
        <HScroll>
          <HThumb />
          <Art w={9} h={11} box="0 0 9 11"><path d="M6 1h2v2H6zM6 4.500h2v2H6zM3 4.500h2v2H3zM6 8h2v2H6zM3 8h2v2H3zM0 8h2v2H0z" fill="#bbb" /></Art>
        </HScroll>
      </RemoteWindow>
      <TaskBar>
        <Weather>
          <Art w={20} h={22} box="0 0 20 22">
            <path d="M8 0q-1 6 4 8l-3 5-6-1-3-5q7 1 8-7z" fill="#f5b50f" />
            <path d="M5 21a4 4 0 0 1-.5-8Q6 8 11 8t5 5q4 0 4 4t-4 4z" fill="#d5e4f6" />
          </Art>
          <WeatherText><Fit w={21}>21°C</Fit><Fit w={63}>Partly cloudy</Fit></WeatherText>
        </Weather>
        {appIcons.map((a) => (
          <AppCell key={a.name}><Art w={21.5} h={25}>{a.art}</Art><Mark $kind={a.mark} /></AppCell>
        ))}
        <AppCell $active><RemoteIcon w={21} h={26} /><Mark $kind="active" /></AppCell>
        <Tray>
          <Chevron up c="#ddd" w={12} h={7} /><Gap $w={8} />
          <Art w={15} h={12} box="0 0 16 12"><path d="M3 8a4 4 0 0 1 3-7q4-2 6 3z" fill="#9b9b9b" /><path d="M3 12a3 3 0 0 1 0-6q2-2 5-1 3-2 5 1 3 0 3 3t-3 3z" fill="#f2f2f2" /></Art>
          <Gap $w={7} />
          <Art w={16} h={18} box="0 0 16 18"><path d="M1.500 9q0-7 6-7.500 4-.2 5.500 3.500M14 1v4.500H9.500M2 12.500q1 3 4 4M1.500 17.500V13H6" stroke="#ddd" strokeWidth="1.200" /><circle cx="11.500" cy="13" r="4" fill="#1683e0" /></Art>
          <Gap $w={9} />
          <Art w={15} h={14} box="0 0 15 14"><path d="M1 5q6.500-7 13 0M3 8q4.500-5 9 0M5 10.500q2.500-3 5 0" stroke="#e6e6e6" strokeWidth="1.400" /><circle cx="7.500" cy="12" r="1.500" fill="#e6e6e6" /></Art>
          <Gap $w={6} />
          <Art w={15} h={16}>{SpeakerWaves}</Art>
          <Gap $w={8} />
          <Art w={15} h={15} box="0 0 15 15"><path d="M3.500 5h9v8h-9zM14 7v4" stroke="#e6e6e6" strokeWidth="1.600" /><path d="M5 7h6v4.500H5zM0 1h6v4L3 8 0 5z" fill="#eee" /></Art>
          <Clock><Fit w={24}>23:41</Fit><Fit w={56}>28-09-2022</Fit></Clock>
          <Art w={12} h={16} box="0 0 12 16"><path d="M5 1q6 1 6 7t-6 7q-3 0-4-2 5-2 5-7 0-3-1-5z" stroke="#ddd" strokeWidth="1.300" /></Art>
        </Tray>
      </TaskBar>
    </Desktop>
  );
}
